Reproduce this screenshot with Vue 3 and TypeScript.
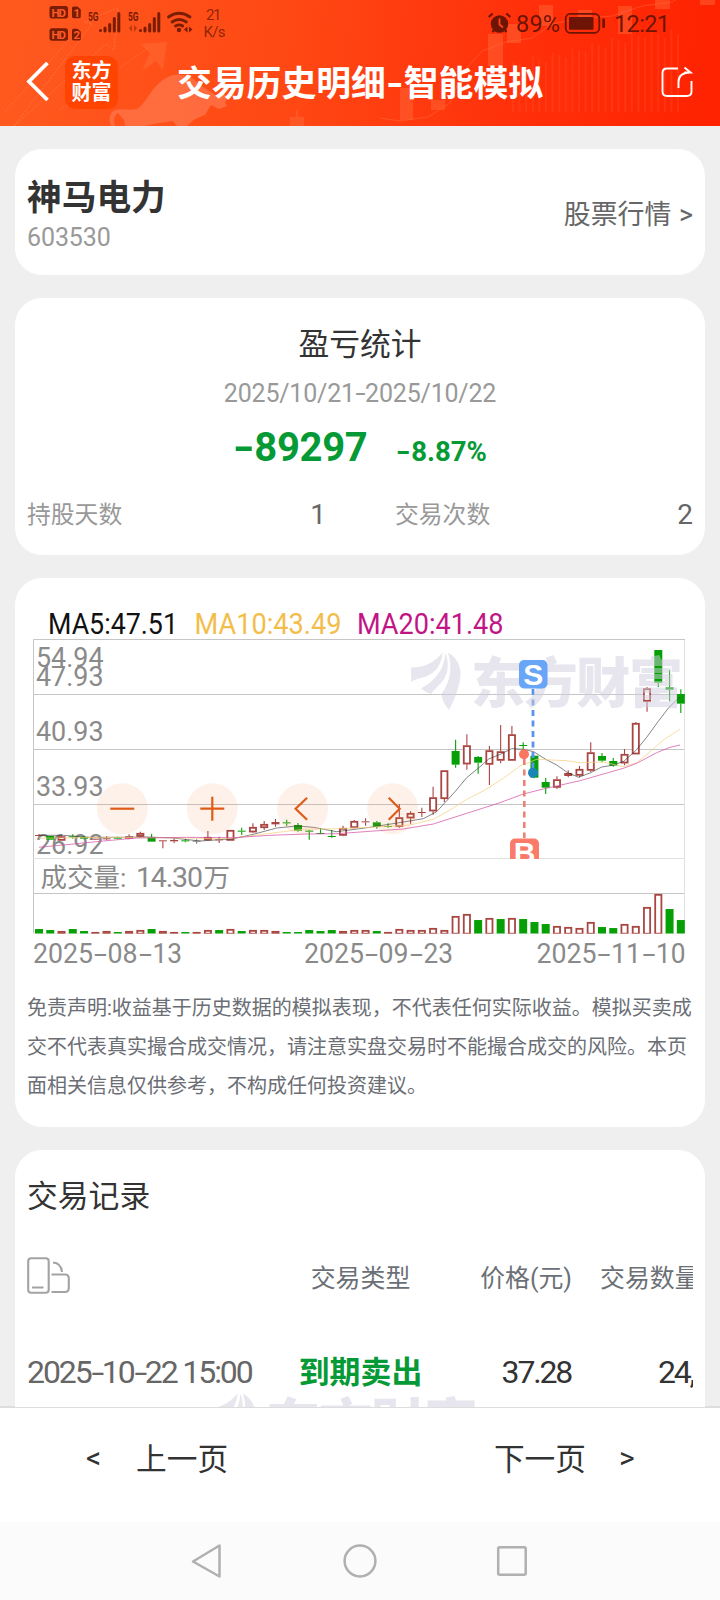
<script setup lang="ts">
type Kind = 'r' | 'g' | 'n'
// kind, wick top, body top, body bottom, wick bottom (thirds of a pixel below y=600), volume height
type Row = [Kind, number, number, number, number, number]

const rows: Row[] = [
  ['r', 702, 705, 707, 708, 14], ['g', 708, 708, 719, 719, 11], ['r', 705, 709, 722, 722, 8],
  ['g', 703, 709, 711, 716, 14], ['g', 708, 711, 716, 718, 8], ['r', 716, 716, 718, 718, 5],
  ['r', 709, 715, 718, 721, 8], ['g', 710, 713, 716, 718, 5], ['r', 703, 709, 716, 718, 8],
  ['r', 695, 699, 710, 714, 11], ['g', 702, 711, 725, 725, 14], ['r', 720, 721, 724, 745, 8],
  ['r', 715, 720, 724, 729, 5], ['g', 717, 721, 724, 727, 5], ['n', 718, 722, 725, 731, 5],
  ['r', 693, 711, 721, 722, 11], ['r', 710, 718, 721, 729, 11], ['r', 690, 690, 722, 722, 14],
  ['g', 683, 692, 695, 705, 8], ['r', 670, 681, 697, 699, 11], ['r', 663, 672, 684, 690, 11],
  ['r', 657, 666, 673, 680, 8], ['g', 659, 667, 670, 677, 5], ['g', 669, 675, 692, 695, 5],
  ['g', 690, 692, 695, 719, 11], ['g', 685, 699, 702, 702, 8], ['g', 690, 708, 711, 713, 11],
  ['r', 677, 684, 707, 709, 8], ['r', 660, 663, 684, 685, 11], ['r', 655, 664, 667, 677, 11],
  ['g', 663, 667, 680, 686, 8], ['g', 670, 678, 680, 683, 5], ['r', 612, 652, 680, 683, 14],
  ['r', 634, 639, 655, 671, 11], ['r', 623, 636, 639, 651, 11], ['r', 560, 592, 634, 644, 17],
  ['r', 511, 511, 597, 606, 11], ['g', 419, 453, 494, 503, 53], ['r', 403, 436, 493, 509, 59],
  ['g', 468, 471, 488, 521, 41], ['r', 438, 451, 494, 555, 47], ['r', 375, 454, 482, 490, 44],
  ['r', 378, 403, 482, 482, 47], ['g', 427, 435, 438, 450, 44], ['g', 467, 467, 533, 535, 35],
  ['g', 534, 546, 563, 582, 29], ['r', 529, 538, 563, 567, 23], ['r', 511, 519, 528, 532, 20],
  ['r', 498, 507, 527, 532, 17], ['r', 427, 457, 512, 516, 35], ['g', 459, 468, 482, 487, 20],
  ['g', 474, 483, 497, 500, 17], ['r', 447, 462, 490, 496, 29], ['r', 366, 369, 463, 463, 23],
  ['r', 261, 265, 305, 335, 80], ['g', 150, 150, 248, 261, 119], ['g', 210, 262, 269, 304, 74],
  ['g', 268, 282, 311, 339, 41],
]
// volume bars whose direction differs from the candle above them
const volumeKind: Record<number, Kind> = { 0: 'g', 14: 'r', 16: 'g', 31: 'r', 37: 'r', 41: 'g', 55: 'r' }
const palette: Record<Kind, string> = { r: '#a94642', g: '#06a006', n: '#777777' }

const candles = rows.map(([k, wt, bt, bb, wb, v], i) => {
  const x = 39 + i * 11.26
  const hollow = k === 'r' && bb - bt >= 10
  const top = 600 + bt / 3
  const h = Math.max((bb - bt) / 3, 1)
  const vk = volumeKind[i] ?? k
  return {
    x, wt: 600 + wt / 3, wb: 600 + wb / 3, top, bottom: top + h, h, hollow,
    color: palette[k], v: v / 3, vColor: palette[vk], vHollow: vk === 'r',
  }
})

const line = (pts: number[][]) => pts.map(([x, y]) => `${(20 + x / 3).toFixed(1)},${(600 + y / 3).toFixed(1)}`).join(' ')
const ma5 = line([[57, 706], [130, 706], [210, 712], [300, 712], [380, 711], [460, 714], [540, 723], [640, 716], [700, 703], [770, 684], [830, 678], [880, 682], [950, 695], [1050, 682], [1150, 666], [1210, 656], [1250, 635], [1305, 575], [1340, 533], [1380, 500], [1406, 477], [1441, 463], [1475, 446], [1510, 448], [1541, 455], [1577, 478], [1610, 495], [1643, 518], [1676, 532], [1712, 518], [1745, 501], [1778, 496], [1811, 484], [1847, 452], [1880, 412], [1914, 365], [1947, 322], [1980, 291]])
const ma10 = line([[57, 715], [250, 712], [400, 713], [500, 714], [600, 717], [650, 713], [750, 700], [850, 688], [950, 686], [1050, 682], [1170, 675], [1240, 658], [1290, 630], [1340, 598], [1390, 573], [1450, 535], [1500, 498], [1550, 478], [1640, 482], [1680, 488], [1750, 486], [1810, 500], [1850, 488], [1890, 455], [1930, 420], [1980, 387]])
const ma20 = line([[57, 742], [130, 735], [250, 723], [350, 714], [500, 712], [640, 713], [750, 706], [860, 702], [950, 701], [1050, 694], [1150, 687], [1240, 672], [1340, 640], [1440, 608], [1510, 582], [1570, 567], [1680, 542], [1810, 505], [1850, 490], [1910, 458], [1950, 442], [1980, 435]])

const prices = [
  { t: '54.94', y: 667 }, { t: '47.93', y: 686 }, { t: '40.93', y: 741 },
  { t: '33.93', y: 796 }, { t: '26.92', y: 854 },
]
// widths of the year, separators, month and day inside an axis date
const slots = [[0, 60], [61, 13], [74.5, 30], [106, 13], [119.5, 29.5]]
const dates = [
  { t: ['2025', '-', '08', '-', '13'], x: 33 },
  { t: ['2025', '-', '09', '-', '23'], x: 304 },
  { t: ['2025', '-', '11', '-', '10'], x: 536.5 },
]
const legend = [
  { t: 'MA5:47.51', x: 48, w: 130, c: '#111' },
  { t: 'MA10:43.49', x: 194.5, w: 147, c: '#f3bd4b' },
  { t: 'MA20:41.48', x: 357, w: 146.5, c: '#c21585' },
]
const controls = [
  { x: 122.3, d: 'M-12 0H12' },
  { x: 212.3, d: 'M-12 0H12M0 -12V12' },
  { x: 302.6, d: 'M4.5 -11L-7 0L4.5 11' },
  { x: 392.7, d: 'M-4 -11L7 0L-4 11' },
]
const leaf = 'M411 667.500Q430 668 442.500 652.500Q441 671 425 677Q415 679 411.300 682ZM445.500 652.500Q452 672 440 684Q433 691 431 694Q425 692 421 688.500Q444 676 445.500 652.500ZM448 652.500Q461 660 460.500 676Q459 691 449 710Q442 702 441.500 694Q455 675 448 652.500Z'
const bgBars = Array.from({ length: 26 }, (_, i) => ({ x: 512 + i * 6.6, y: 62 - Math.min(i, 20) * 1.6 + (i % 3) * 4 }))
</script>

<template>
  <div class="screen">
    <header class="top">
      <svg class="top-art" width="720" height="126" viewBox="0 0 720 126">
        <g fill="none" stroke="#ffb08a" stroke-opacity=".3">
          <path d="M14 126L92 24l-8-2 34-14-4 42-8-6L14 126" stroke-dasharray="2 1.5" />
          <path d="M5 112L72 36M60 110l88-62" stroke-dasharray="1.5 2" />
          <path d="M380 118l20 3 28-4 22-14 12-30 20-22 24-9 26-4 20-14 30-6 30-2 30-10 30-4 18-10" stroke="#ff8a5c" />
        </g>
        <path d="M140 44l27-2-4 28-7-9-14 10 8-18z" fill="#ff8150" opacity=".3" />
        <path d="M111 126c-2-6-2-13 4-16 7-2 14 1 22-1 8-5 12-16 20-24 8-8 18-12 24-10 8 0 16 6 22 12l14 9 6-2 6 3-4 5 2 4-8 3-8-4-6 10-10 4-8 7h-10l-4-5-20 3-8 2h-20l-1-6-6-7c-4 2-5 7-3 13z" fill="#ff8158" opacity=".6" />
        <g fill="#ff6b3c" opacity=".45">
          <rect x="290" y="117" width="14" height="9" /><rect x="296" y="110" width="2" height="8" />
          <rect x="400" y="88" width="13" height="32" /><rect x="431" y="100" width="14" height="10" />
          <rect x="488" y="34" width="15" height="32" /><rect x="507" y="24" width="14" height="19" />
          <rect x="539" y="5" width="14" height="21" /><rect x="578" y="10" width="14" height="16" />
          <rect x="618" y="6" width="14" height="28" /><rect x="655" y="0" width="15" height="9" />
          <rect x="700" y="0" width="15" height="5" />
        </g>
        <g fill="#ff6a3a" opacity=".2">
          <rect v-for="b in bgBars" :key="b.x" :x="b.x" :y="b.y" width="2" :height="112 - b.y" />
        </g>
        <g fill="#7a1d05">
          <g v-for="(n, k) in ['1', '2']" :key="n" :transform="`translate(0 ${k * 22.3})`">
            <rect x="49.500" y="6" width="18.500" height="12.500" rx="2.500" />
            <path d="M72 8q0-1.500 1.500-1.500h4l3.300 3v7q0 1.800-1.500 1.800h-5.800q-1.500 0-1.500-1.800z" />
            <text x="51.500" y="16.500" class="tiny" fill="#ff5a26" textLength="14.500">HD</text>
            <text x="73.500" y="16.500" class="tiny" fill="#ff5a26">{{ n }}</text>
          </g>
          <text x="88" y="20.500" class="net" textLength="10.500" lengthAdjust="spacingAndGlyphs">5G</text>
          <text x="128" y="20.500" class="net" textLength="10.500" lengthAdjust="spacingAndGlyphs">5G</text>
          <path d="M129 28l3-3v7zM134 25l3 3-3 4z" opacity=".5" />
        </g>
        <g stroke="#7a1d05" stroke-width="3" stroke-linecap="round">
          <path d="M100.500 30.500v0M105 28v3M109.700 24.500v6.500M114.300 18.500v12.500M118.800 13.500v17.500" />
          <path d="M140.500 30.500v0M145 28v3M149.700 24.500v6.500M154.300 18.500v12.500M158.800 13.500v17.500" />
        </g>
        <g fill="none" stroke="#7a1d05" stroke-width="2.800" stroke-linecap="round">
          <path d="M168.500 17q10.500-7.500 21.500 0M172 22q7.200-5 14.400 0M175.500 26q3.800-2.300 7.200 0" />
        </g>
        <circle cx="179" cy="30" r="2.200" fill="#7a1d05" />
        <path d="M184 29.500l3.500-3v6zM189 26.500l3.500 3-3.500 3z" fill="#7a1d05" />
        <g fill="#7a1d05" fill-opacity=".85">
          <text x="206" y="19.500" font-size="15" textLength="15.500">21</text>
          <text x="203.500" y="36.500" font-size="15" textLength="22">K/s</text>
        </g>
        <g fill="#6e1404">
          <circle cx="499.500" cy="24" r="8.700" />
          <path d="M488.700 17l4-3.500M510.300 17l-4-3.500M492.500 32l1.500-2M506.500 32l-1.500-2" stroke="#6e1404" stroke-width="2.200" />
          <path d="M499.500 18.500v6l3.500 3" fill="none" stroke="#ff431a" stroke-width="1.800" />
          <text x="516" y="32" font-size="23.500" textLength="44">89%</text>
          <rect x="569" y="17" width="24.500" height="12.700" rx="1" />
          <rect x="565.700" y="13.800" width="33.600" height="19" rx="4.500" fill="none" stroke="#6e1404" stroke-width="1.800" />
          <rect x="602.300" y="18.500" width="2.700" height="9.500" rx="1" />
          <text x="614" y="32" font-size="23.500" textLength="56">12:21</text>
        </g>
      </svg>
      <div class="bar">
        <svg class="back" width="24" height="40" viewBox="0 0 24 40"><path d="M21.500 1L3 19.500 21.500 38" fill="none" stroke="#fff" stroke-width="3.800" /></svg>
        <div class="logo"><span>东方</span><span>财富</span></div>
        <h1>交易历史明细<i>-</i>智能模拟</h1>
        <svg class="share" width="32" height="32" viewBox="0 0 32 32" fill="none" stroke="#fff" stroke-width="1.900">
          <path d="M17 2.500H6Q1.500 2.500 1.500 7v18.500Q1.500 30 6 30h20q4.500 0 4.500-4.500V15" />
          <path d="M17.500 22v-6q0-9 11-9.500M23.500 1.500l6 5h-6" />
        </svg>
      </div>
    </header>

    <main>
      <section class="card stock">
        <div>
          <h2>神马电力</h2>
          <p class="code">603530</p>
        </div>
        <a class="quote">股票行情 <span>&gt;</span></a>
      </section>

      <section class="card stats">
        <h3>盈亏统计</h3>
        <p class="range">2025/10/21<i class="dash">-</i>2025/10/22</p>
        <p class="profit"><b><i class="dash">-</i>89297</b><em><i class="dash">-</i>8.87%</em></p>
        <dl>
          <div><dt>持股天数</dt><dd>1</dd></div>
          <div><dt>交易次数</dt><dd>2</dd></div>
        </dl>
      </section>

      <section class="card chart-card">
        <svg class="chart" width="690" height="402" viewBox="15 578 690 402">
          <defs>
            <clipPath id="plot"><rect x="33" y="639" width="652" height="220" /></clipPath>
          </defs>
          <text v-for="l in legend" :key="l.t" :x="l.x" y="634" :fill="l.c" font-size="29" :textLength="l.w" lengthAdjust="spacingAndGlyphs">{{ l.t }}</text>
          <g fill="none" stroke="#c6c6c6">
            <path d="M33.500 933V639.500H685M33 694.500H685M33 749.500H685M33 804.500H685M33 893.500H685" />
            <path d="M33 858.500H685M684.500 640V933M33 933.500H685" stroke="#e2e2e2" />
          </g>
          <g fill="#8a8a8a" font-size="28.500">
            <text v-for="p in prices" :key="p.t" x="36" :y="p.y" textLength="67.500" lengthAdjust="spacingAndGlyphs">{{ p.t }}</text>
            <text x="40.500" y="886.500" font-size="26.500">成交量:</text>
            <text x="136" y="887" textLength="67">14.30</text>
            <text x="203.500" y="886.500" font-size="26.500">万</text>
            <g v-for="d in dates" :key="d.x">
              <text v-for="(s, i) in d.t" :key="i" :x="d.x + slots[i][0]" y="962.500" :textLength="slots[i][1]" lengthAdjust="spacingAndGlyphs">{{ s }}</text>
            </g>
          </g>

          <g clip-path="url(#plot)">
            <g v-for="c in candles" :key="c.x">
              <path :d="`M${c.x} ${c.wt}V${c.top}M${c.x} ${c.bottom}V${c.wb}`" :stroke="c.color" stroke-width="1.100" />
              <rect v-if="c.hollow" :x="c.x - 3.100" :y="c.top + 0.800" width="6.200" :height="Math.max(c.h - 1.600, 1)" fill="#fff" :stroke="c.color" stroke-width="1.800" />
              <rect v-else :x="c.x - 4" :y="c.top" width="8" :height="c.h" :fill="c.color" />
            </g>
            <polyline :points="ma5" fill="none" stroke="#333" stroke-opacity=".75" stroke-width=".8" />
            <polyline :points="ma10" fill="none" stroke="#f6cf7e" stroke-opacity=".8" stroke-width=".9" />
            <polyline :points="ma20" fill="none" stroke="#d24fa5" stroke-opacity=".8" stroke-width=".9" />
            <circle cx="524" cy="754.300" r="5" fill="#fb7560" />
            <path d="M524.300 759V838" stroke="#e98373" stroke-width="2.600" stroke-dasharray="6 4.500" />
            <rect x="510" y="838.500" width="29" height="29" rx="5" fill="#fb7b6b" />
            <text x="524.500" y="863" class="mark">B</text>
            <path d="M533 689V770" stroke="#5794ee" stroke-width="2.800" stroke-dasharray="6 4.500" />
            <circle cx="533" cy="772.700" r="5" fill="#1b86b8" />
          </g>

          <g v-for="c in candles" :key="'v' + c.x">
            <rect v-if="c.vHollow" :x="c.x - 3.100" :y="933.700 - c.v + 0.800" width="6.200" :height="c.v - 0.800" fill="#fff" :stroke="c.vColor" stroke-width="1.800" />
            <rect v-else :x="c.x - 4" :y="933.700 - c.v" width="8" :height="c.v" :fill="c.vColor" />
          </g>
          <rect x="33" y="933.700" width="652" height="2" fill="#fff" />

          <g class="wm">
            <path :d="leaf" />
            <text x="471" y="702.500" font-size="54" textLength="212">东方财富</text>
          </g>
          <rect x="519" y="660" width="28.500" height="28.500" rx="5" fill="#5e9ff8" fill-opacity=".93" />
          <text x="533.200" y="684.500" class="mark">S</text>

          <g v-for="b in controls" :key="b.x" :transform="`translate(${b.x} 808.700)`">
            <circle r="25.500" fill="#f5803c" fill-opacity=".11" />
            <path :d="b.d" fill="none" stroke="#df5c18" stroke-width="2.200" />
          </g>
        </svg>
        <p class="note">
          <span>免责声明:收益基于历史数据的模拟表现，不代表任何实际收益。模拟买卖成</span>
          <span>交不代表真实撮合成交情况，请注意实盘交易时不能撮合成交的风险。本页</span>
          <span>面相关信息仅供参考，不构成任何投资建议。</span>
        </p>
      </section>

      <section class="card records">
        <h3>交易记录</h3>
        <div class="table">
          <div class="row head">
            <span class="c1">
              <svg width="44" height="38" viewBox="0 0 44 38" fill="none" stroke="#a3a3a3" stroke-width="2.100">
                <rect x="1.200" y="1.200" width="20.500" height="34.500" rx="3" />
                <path d="M5 30.500h11.500M24.500 17.500H38q3.800 0 3.800 4v9.500q0 4-3.800 4H24.500M26 5.500q8 .5 9 9.500" />
              </svg>
            </span>
            <span class="c2">交易类型</span><span class="c3">价格(元)</span><span class="c4">交易数量</span>
          </div>
          <div class="row data">
            <span class="c1">2025<i class="dash">-</i>10<i class="dash">-</i>22 15:00</span>
            <span class="c2">到期卖出</span><span class="c3">37.28</span><span class="c4">24,000</span>
          </div>
        </div>
        <svg class="wm wm-foot" width="280" height="62" viewBox="408 648 280 62">
          <path :d="leaf" />
          <text x="471" y="702.500" font-size="54" textLength="212">东方财富</text>
        </svg>
      </section>
    </main>

    <nav class="pager">
      <a><span class="arrow">&lt;</span><span class="label">上一页</span></a>
      <a><span class="label">下一页</span><span class="arrow">&gt;</span></a>
    </nav>
    <footer>
      <svg width="34" height="38" viewBox="0 0 34 38"><path d="M28.500 3.500v31L2 19.500z" /></svg>
      <svg width="34" height="38" viewBox="0 0 34 38"><circle cx="17" cy="19" r="15.400" /></svg>
      <svg width="34" height="38" viewBox="0 0 34 38"><rect x="3.200" y="5.200" width="27.500" height="27.500" rx="1.500" /></svg>
    </footer>
  </div>
</template>

<style>
body { margin: 0; overflow: hidden; }
</style>

<style scoped>
.screen {
  width: 720px; height: 1600px; display: flex; flex-direction: column; overflow: hidden;
  background: #efefef; color: #333;
  font-family: Roboto, "Noto Sans CJK SC", sans-serif;
}
h1, h2, h3, p, dl, dd { margin: 0; }
i, em { font-style: normal; }
.dash { display: inline-block; transform: scaleX(1.45); margin: 0 .07em; }

.top {
  position: relative; height: 126px; flex: none; display: flex; flex-direction: column; justify-content: flex-end;
  background: linear-gradient(97deg, #ff5a1f 0%, #ff4814 40%, #ff300a 72%, #ff2200 100%);
}
.top-art { position: absolute; inset: 0; }
.tiny { font-size: 11.500px; font-weight: 700; }
.net { font-size: 12px; font-weight: 700; }
.bar { position: relative; display: flex; align-items: center; height: 88px; padding: 0 27px 0 25.500px; }
.back { flex: none; }
.logo {
  width: 53px; height: 53px; margin-left: 15.500px; border-radius: 10px; background: #ff4402;
  display: flex; flex-direction: column; align-items: center; justify-content: center; flex: none;
}
.logo span { color: #fff; font-size: 20px; line-height: 22px; font-weight: 700; }
h1 { flex: 1; margin-left: 59px; padding-top: 4px; color: #fff; font-size: 34.800px; line-height: 44px; font-weight: 700; white-space: nowrap; }
h1 i { display: inline-block; width: 18px; text-align: center; transform: scaleX(1.3); }
.share { flex: none; }

main { flex: none; height: 1258px; padding: 23px 15px 0; display: flex; flex-direction: column; gap: 23px; overflow: hidden; }
.card { background: #fff; border-radius: 27px; flex: none; box-sizing: border-box; }
.stock { height: 126px; padding: 6px 12px 0; display: flex; align-items: center; justify-content: space-between; }
h2 { margin-top: 2px; font-size: 34.700px; line-height: 42px; font-weight: 700; }
.code { margin-top: 1px; font-size: 25px; line-height: 36px; color: #999; letter-spacing: -.1px; }
.quote { margin-bottom: 6px; font-size: 26.900px; color: #666; }
.quote span { display: inline-block; margin-left: 1px; width: 14px; }

.stats { height: 257px; padding: 26px 12px 0; text-align: center; }
h3 { font-size: 30.800px; line-height: 42px; font-weight: 400; }
.range { margin-top: 11px; font-size: 25px; line-height: 34px; color: #999; letter-spacing: -.2px; }
.profit { margin-top: 14px; display: flex; align-items: baseline; justify-content: center; gap: 29px; color: #069a36; line-height: 46px; }
.profit b { font-size: 40px; letter-spacing: -.3px; }
.profit em { font-size: 27.500px; font-weight: 700; }
dl { margin-top: 22px; display: grid; grid-template-columns: 299px 298px; justify-content: space-between; }
dl div { display: flex; justify-content: space-between; align-items: center; line-height: 36px; }
dt { font-size: 23.800px; color: #999; }
dd { font-size: 28px; color: #666; }

.chart-card { height: 549px; }
.chart { display: block; }
.mark { font-size: 30px; font-weight: 700; fill: #fff; text-anchor: middle; font-family: "Liberation Sans", Arial, sans-serif; }
.wm { fill: #cfccdb; fill-opacity: .5; font-weight: 900; }
.note { padding: 9px 0 0 12px; font-size: 20px; line-height: 39px; color: #6b6e74; }
.note span { display: block; white-space: nowrap; }

.records { position: relative; height: 300px; padding: 25.500px 12px 0; }
.table { overflow: hidden; }
.row { display: grid; grid-template-columns: 249px 169px 127px 180px; align-items: center; white-space: nowrap; }
.head { height: 82px; margin-top: 17px; font-size: 24.900px; color: #6b7076; }
.head svg { display: block; }
.c2 { text-align: center; }
.c3 { text-align: right; }
.c4 { padding-left: 28px; }
.data { height: 106px; margin-top: 2px; font-size: 32px; }
.data .c1 { color: #666; letter-spacing: -2.100px; }
.data .c2 { color: #069a36; font-weight: 700; font-size: 30.900px; padding-bottom: 5px; }
.data .c3, .data .c4 { letter-spacing: -2.200px; }
.data .c3 { padding-right: 1px; }
.data .c4 { padding-left: 86px; }
.wm-foot { position: absolute; left: 188px; top: 239px; }

.pager {
  flex: none; height: 114px; box-sizing: content-box; border-top: 2px solid #ddd; background: #fff;
  display: flex; justify-content: space-between; padding: 0 84px 0 86px; margin-top: -1px;
}
.pager a { height: 100px; display: flex; align-items: center; font-size: 30.700px; gap: 33px; }
.label { padding-bottom: 4px; }
.arrow { font-size: 30px; width: 17px; padding-bottom: 1px; }
footer { flex: 1; background: #fbfbfb; display: flex; justify-content: center; align-items: center; gap: 118px; }
footer svg { fill: none; stroke: #b0b0b0; stroke-width: 2.500; stroke-linejoin: round; }
</style>
